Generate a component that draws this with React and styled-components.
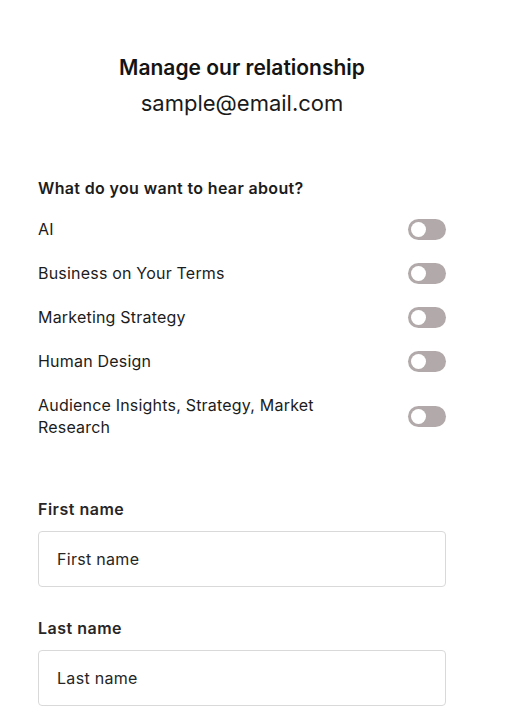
import { createGlobalStyle, styled } from "styled-components";

const GlobalStyle = createGlobalStyle`
  body {
    margin: 0;
    background: #ffffff;
    font-family: Inter, "Liberation Sans", sans-serif;
    color: #1c1c1c;
  }
`;

const Page = styled.div`
  width: 408px;
  padding: 54px 0 0 38px;
`;

const Header = styled.div`
  display: flex;
  flex-direction: column;
  align-items: center;
  gap: 7px;
`;

const Title = styled.h1`
  margin: 0;
  font-size: 21px;
  line-height: 28px;
  font-weight: 600;
  color: #141414;
`;

const Email = styled.div`
  font-size: 22px;
  line-height: 28px;
  color: #1a1a1a;
`;

const Topics = styled.section`
  margin-top: 60px;
  display: flex;
  flex-direction: column;
  gap: 19px;
`;

const SectionHeading = styled.h2`
  margin: 0;
  font-size: 16px;
  line-height: 22px;
  font-weight: 600;
  letter-spacing: 0.35px;
`;

const TopicList = styled.div`
  display: flex;
  flex-direction: column;
  gap: 22px;
`;

const TopicRow = styled.label`
  display: flex;
  align-items: center;
  justify-content: space-between;
  gap: 24px;
`;

const TopicName = styled.span`
  font-size: 16px;
  line-height: 22px;
  letter-spacing: 0.2px;
  max-width: 320px;
`;

const Toggle = styled.span`
  flex: none;
  position: relative;
  width: 38px;
  height: 21px;
  border-radius: 11px;
  background: ${(p) => (p.$on ? "#1c1c1c" : "#b2aaaa")};
  &::after {
    content: "";
    position: absolute;
    top: 3px;
    left: ${(p) => (p.$on ? "20px" : "3px")};
    width: 15px;
    height: 15px;
    border-radius: 50%;
    background: #ffffff;
  }
`;

const Form = styled.form`
  margin-top: 60px;
  display: flex;
  flex-direction: column;
  gap: 30px;
`;

const Field = styled.div`
  display: flex;
  flex-direction: column;
  gap: 11px;
`;

const FieldLabel = styled.label`
  font-size: 16px;
  line-height: 22px;
  font-weight: 600;
  letter-spacing: 0.5px;
  color: #2a2626;
`;

const Input = styled.input`
  box-sizing: border-box;
  width: 100%;
  height: 56px;
  padding: 0 18px;
  border: 1px solid #d9d9d9;
  border-radius: 4px;
  font-family: inherit;
  font-size: 16px;
  letter-spacing: 0.3px;
  color: #1c1c1c;
  outline: none;
  &::placeholder {
    color: #262626;
  }
`;

const topics = [
  "AI",
  "Business on Your Terms",
  "Marketing Strategy",
  "Human Design",
  "Audience Insights, Strategy, Market Research",
];

export default function App() {
  return (
    <>
      <GlobalStyle />
      <Page>
        <Header>
          <Title>Manage our relationship</Title>
          <Email>sample@email.com</Email>
        </Header>

        <Topics>
          <SectionHeading>What do you want to hear about?</SectionHeading>
          <TopicList>
            {topics.map((t) => (
              <TopicRow key={t}>
                <TopicName>{t}</TopicName>
                <Toggle />
              </TopicRow>
            ))}
          </TopicList>
        </Topics>

        <Form>
          <Field>
            <FieldLabel htmlFor="first">First name</FieldLabel>
            <Input id="first" placeholder="First name" />
          </Field>
          <Field>
            <FieldLabel htmlFor="last">Last name</FieldLabel>
            <Input id="last" placeholder="Last name" />
          </Field>
        </Form>
      </Page>
    </>
  );
}
